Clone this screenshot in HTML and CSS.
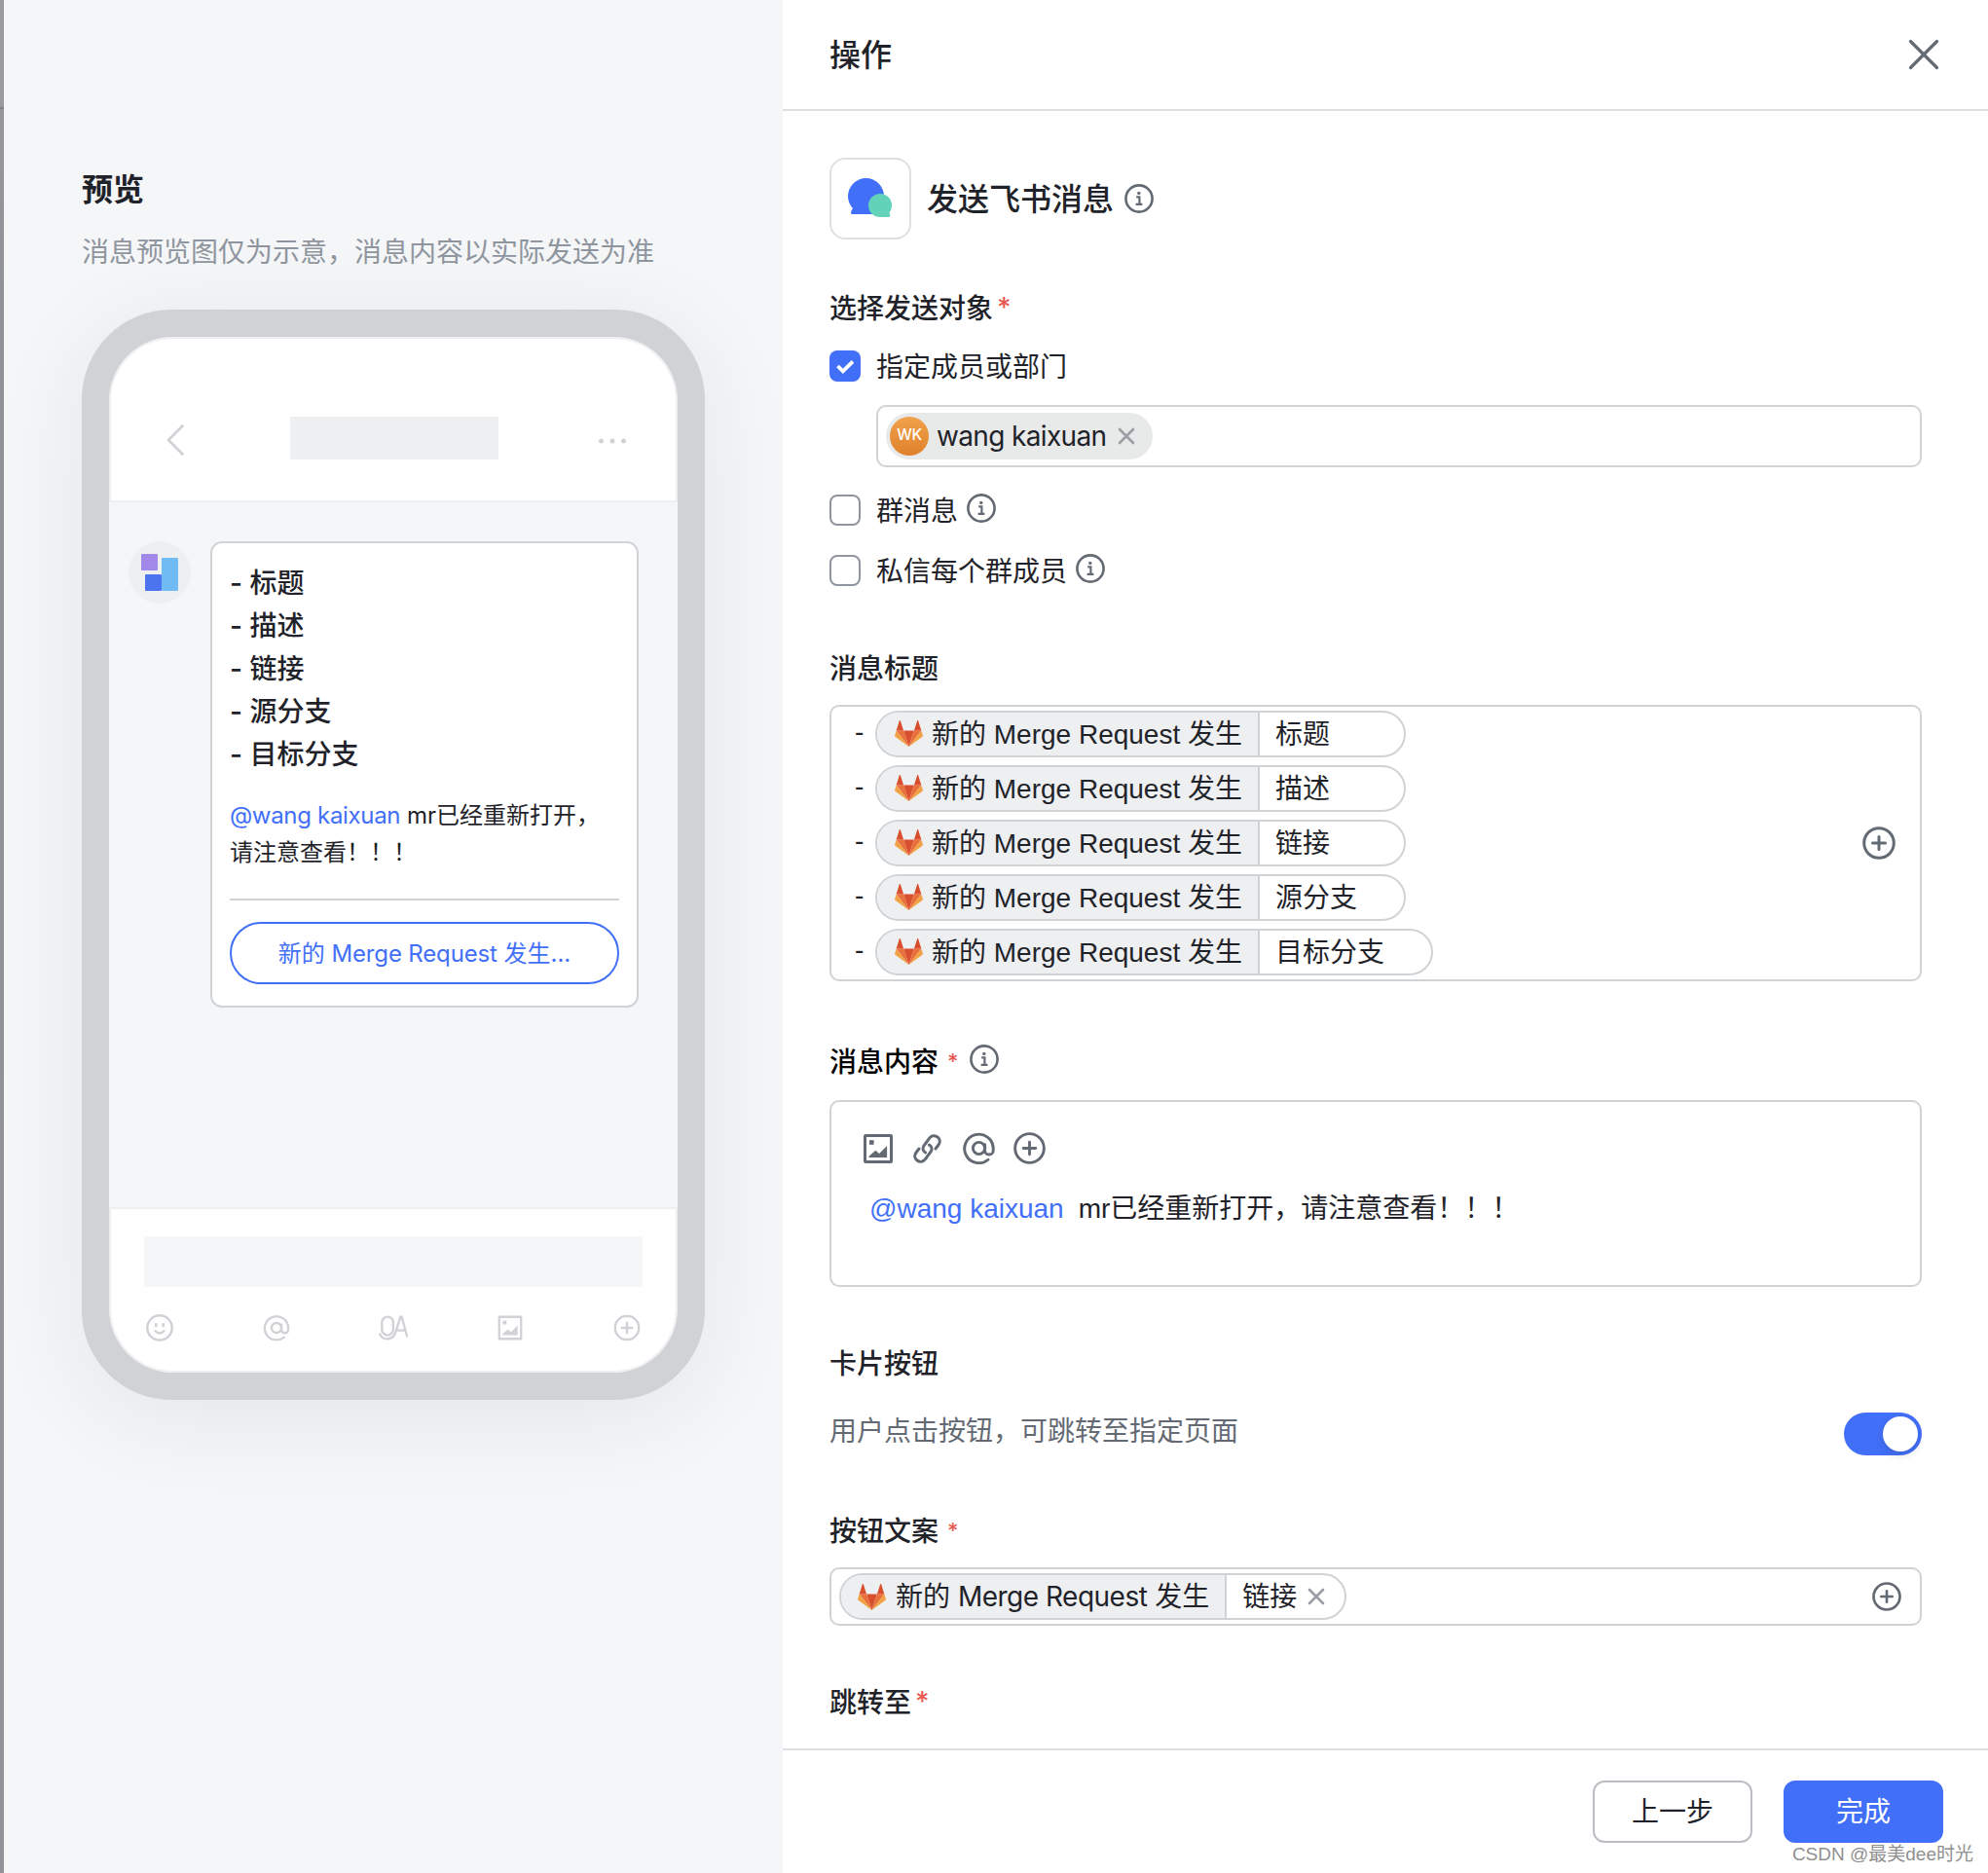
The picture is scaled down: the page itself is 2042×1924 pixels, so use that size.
FILE: index.html
```html
<!DOCTYPE html>
<html lang="zh-CN">
<head>
<meta charset="utf-8">
<title>操作</title>
<link rel="stylesheet" href="styles.css">
</head>
<body>
<svg class="sprite" aria-hidden="true">
  <symbol id="info" viewBox="0 0 30 30"><circle cx="15" cy="15" r="13.6" fill="none" stroke="currentColor" stroke-width="2.6"/><circle cx="14.8" cy="9.4" r="1.7" fill="currentColor"/><path d="M12.2 13.4h3.2v7M11.6 20.8h6.8" fill="none" stroke="currentColor" stroke-width="2.2"/></symbol>
  <symbol id="plus" viewBox="0 0 34 34"><circle cx="17" cy="17" r="15.3" fill="none" stroke="currentColor" stroke-width="3"/><path d="M17 10.500v13M10.500 17h13" fill="none" stroke="currentColor" stroke-width="3" stroke-linecap="round"/></symbol>
  <symbol id="at" viewBox="0 0 34 34"><g fill="none" stroke="currentColor" stroke-width="3" stroke-linecap="round"><circle cx="17" cy="17" r="6.3"/><path d="M23.300 13v6.200a4.400 4.400 0 0 0 8.900 0V17a15.200 15.200 0 1 0-5.400 12.100"/></g></symbol>
  <symbol id="image" viewBox="0 0 30 30"><rect x="1.500" y="1.500" width="27" height="27" rx=".6" fill="none" stroke="currentColor" stroke-width="3"/><rect x="6" y="6.200" width="4.600" height="4.600" fill="currentColor"/><path d="M5.500 24v-1.200l6.800-6.100 3.800 3.300 8-8V24z" fill="currentColor"/></symbol>
  <symbol id="fox" viewBox="0 0 28 26"><path fill="#d9502f" d="M14 26 19.2 10H8.8z"/><path fill="#e9703a" d="M14 26 8.8 10H1.6zM14 26l5.2-16h7.200z"/><path fill="#f0a245" d="M1.600 10 .1 14.900c-.2.500 0 1 .4 1.300L14 26zM26.400 10l1.500 4.900c.2.500 0 1-.4 1.300L14 26z"/><path fill="#d9502f" d="M1.600 10h7.200L5.700.5c-.2-.6-.9-.6-1.100 0zM26.400 10h-7.200L22.300.5c.2-.6.9-.6 1.100 0z"/></symbol>
  <symbol id="cross" viewBox="0 0 18 18"><path d="M2 2l14 14M16 2L2 16" fill="none" stroke="currentColor" stroke-width="2.600" stroke-linecap="round"/></symbol>
</svg>
<div class="app">
  <div class="edge"></div>
  <aside class="preview">
    <h2 class="preview-title">预览</h2>
    <p class="preview-note">消息预览图仅为示意，消息内容以实际发送为准</p>
    <div class="phone">
      <div class="phone-screen">
        <div class="phone-head">
          <svg class="back" viewBox="0 0 20 34"><path d="M17.500 2.500 3 17l14.500 14.500" fill="none" stroke="currentColor" stroke-width="2.800" stroke-linecap="round" stroke-linejoin="round"/></svg>
          <div class="phone-name"></div>
          <svg class="more" viewBox="0 0 30 8"><circle cx="3.500" cy="4" r="2.500"/><circle cx="15" cy="4" r="2.500"/><circle cx="26.500" cy="4" r="2.500"/></svg>
        </div>
        <div class="phone-chat">
          <svg class="bot" viewBox="0 0 64 64"><circle cx="32" cy="32" r="32" fill="#eeeff1"/><rect x="13" y="13" width="17" height="17" rx="1" fill="#a288e8"/><rect x="17" y="34" width="17" height="17" rx="1" fill="#4c74ee"/><rect x="34" y="17" width="17" height="34" rx="1" fill="#71bbf5"/></svg>
          <div class="card">
            <div class="card-title"><div>- 标题</div><div>- 描述</div><div>- 链接</div><div>- 源分支</div><div>- 目标分支</div></div>
            <p class="card-text"><span class="mention">@wang kaixuan</span> mr已经重新打开，<br>请注意查看！！！</p>
            <div class="card-action">新的 <span class="latin">Merge Request</span> 发生...</div>
          </div>
        </div>
        <div class="phone-foot">
          <div class="phone-input"></div>
          <div class="phone-tools">
            <svg viewBox="0 0 32 32"><g fill="none" stroke="currentColor" stroke-width="2.500"><circle cx="16" cy="16" r="12.700"/><path d="M10.800 18.500q5.200 6 10.400 0"/></g><path d="M11 11.300h2.600v4H11zM18.400 11.300H21v4h-2.600z" fill="currentColor"/></svg>
            <svg viewBox="-3 -3 40 40"><use href="#at" width="34" height="34"/></svg>
            <svg viewBox="0 0 32 32"><g fill="none" stroke="currentColor" stroke-width="2.400" stroke-linecap="round"><rect x="4.300" y="4.600" width="11.600" height="19" rx="5.800"/><path d="M2.300 22.500c2 6.200 12.500 7.200 15.700-1l5.400-16.900h1.200L30 24.500M19.800 18.600h8"/></g></svg>
            <svg viewBox="-4 -4 38 38"><use href="#image" width="30" height="30"/></svg>
            <svg viewBox="-3 -3 40 40"><use href="#plus" width="34" height="34"/></svg>
          </div>
        </div>
      </div>
    </div>
  </aside>
  <main class="panel">
    <header class="panel-head">
      <h1>操作</h1>
      <svg class="close" viewBox="0 0 32 32"><path d="M2.500 2.500l27 27M29.500 2.500l-27 27" fill="none" stroke="currentColor" stroke-width="3.200" stroke-linecap="round"/></svg>
    </header>
    <div class="panel-body">
      <div class="action">
        <div class="action-icon"><svg viewBox="0 0 48 44"><g fill="#426ff8"><circle cx="19.500" cy="20.500" r="18.500"/><path d="M6 32c0 2-2 3.500-2 5.500 0 1 .8 1.500 1.800 1.500H28V28z"/></g><g fill="#62d2b8"><circle cx="34" cy="30" r="12"/><path d="M43 36c0 1.500 1.300 2.500 1.300 4.300 0 1.100-.7 1.700-1.600 1.700H33v-6z"/></g></svg></div>
        <span class="action-name">发送飞书消息</span>
        <svg class="info"><use href="#info"/></svg>
      </div>

      <div class="label target-label">选择发送对象<span class="req tight">*</span></div>
      <div class="check"><span class="box checked"><svg viewBox="0 0 32 32"><path d="M8.500 16l5.300 5.300L24 11.300" fill="none" stroke="#fff" stroke-width="3.800"/></svg></span>指定成员或部门</div>
      <div class="member-input">
        <span class="member"><span class="avatar">WK</span><span class="member-name">wang kaixuan</span><svg class="cross"><use href="#cross"/></svg></span>
      </div>
      <div class="check group-check"><span class="box"></span>群消息<svg class="info"><use href="#info"/></svg></div>
      <div class="check private-check"><span class="box"></span>私信每个群成员<svg class="info"><use href="#info"/></svg></div>

      <div class="label title-label">消息标题</div>
      <div class="title-input">
        <div class="title-rows">
          <div class="title-row"><span class="dash">-</span><span class="token"><span class="source"><svg><use href="#fox"/></svg>新的 Merge Request 发生</span><span class="field">标题</span></span></div>
          <div class="title-row"><span class="dash">-</span><span class="token"><span class="source"><svg><use href="#fox"/></svg>新的 Merge Request 发生</span><span class="field">描述</span></span></div>
          <div class="title-row"><span class="dash">-</span><span class="token"><span class="source"><svg><use href="#fox"/></svg>新的 Merge Request 发生</span><span class="field">链接</span></span></div>
          <div class="title-row"><span class="dash">-</span><span class="token"><span class="source"><svg><use href="#fox"/></svg>新的 Merge Request 发生</span><span class="field">源分支</span></span></div>
          <div class="title-row"><span class="dash">-</span><span class="token"><span class="source"><svg><use href="#fox"/></svg>新的 Merge Request 发生</span><span class="field">目标分支</span></span></div>
        </div>
        <svg class="add-big"><use href="#plus"/></svg>
      </div>

      <div class="label content-label">消息内容<span class="req">*</span><svg class="info"><use href="#info"/></svg></div>
      <div class="editor">
        <div class="tools">
          <svg class="tool-image"><use href="#image"/></svg>
          <svg class="tool-link" viewBox="0 -1 30 32"><g fill="none" stroke="currentColor" stroke-width="3" stroke-linecap="round"><path d="M12.600 19C9.800 17.300 9.200 14.300 11 11.800L16.500 4.300C18.600 1.500 22.200.9 25 3c2.600 2 3 5.400 1 8l-3 4"/><path d="M16.400 11c2.800 1.700 3.400 4.700 1.600 7.200l-5.500 7.500C10.400 28.500 6.800 29.100 4 27c-2.600-2-3-5.400-1-8l3-4"/></g></svg>
          <svg class="tool-round"><use href="#at"/></svg>
          <svg class="tool-round"><use href="#plus"/></svg>
        </div>
        <p class="editor-text"><span class="mention">@wang kaixuan</span><span>mr已经重新打开，请注意查看！！！</span></p>
      </div>

      <div class="label card-label">卡片按钮</div>
      <div class="switch-row"><span>用户点击按钮，可跳转至指定页面</span><span class="switch"></span></div>

      <div class="label copy-label">按钮文案<span class="req">*</span></div>
      <div class="copy-input">
        <span class="token copy-token"><span class="source"><svg><use href="#fox"/></svg><span>新的 <span class="latin">Merge Request</span> 发生</span></span><span class="field">链接<svg class="cross"><use href="#cross"/></svg></span></span>
        <svg class="add"><use href="#plus"/></svg>
      </div>

      <div class="label jump-label">跳转至<span class="req tight">*</span></div>
    </div>
    <footer class="panel-foot">
      <button class="btn">上一步</button>
      <button class="btn primary">完成</button>
    </footer>
    <div class="watermark">CSDN @最美dee时光</div>
  </main>
</div>
</body>
</html>
```
FILE: styles.css
```css
* { box-sizing: border-box; margin: 0; padding: 0; }
body {
  font-family: Inter, "Noto Sans CJK SC", sans-serif;
  font-size: 28px;
  line-height: 44px;
  color: #1f2329;
  background: #fff;
}
svg { display: block; flex: none; }
.sprite { position: absolute; width: 0; height: 0; }
.app { display: flex; width: 2042px; height: 1924px; overflow: hidden; }
.edge {
  flex: none;
  width: 4px;
  background: linear-gradient(#9b9b9d 0 110px, #828286 110px 112px, #97979b 112px, #919198 300px, #929298);
}

/* preview column */
.preview {
  width: 800px;
  flex: none;
  padding: 171px 80px 0;
  background: #f5f6f8;
}
.preview-title { font-size: 32px; line-height: 48px; font-weight: 700; }
.preview-note { margin-top: 18px; color: #8f959e; white-space: nowrap; }
.phone {
  width: 640px;
  height: 1120px;
  margin-top: 37px;
  padding: 28px;
  border-radius: 92px;
  background: #d1d2d6;
  box-shadow: 0 16px 96px rgba(31, 35, 41, .08);
}
.phone-screen {
  display: flex;
  flex-direction: column;
  height: 1064px;
  border-radius: 66px;
  overflow: hidden;
  background: #f5f6f8;
}
.phone-head, .phone-foot { background: #fff; border: 2px solid #eeeff1; color: #d1d2d6; }
.phone-head {
  display: flex;
  align-items: center;
  justify-content: space-between;
  height: 170px;
  padding: 38px 50px 0 56px;
  border-radius: 66px 66px 0 0;
}
.back { width: 20px; height: 34px; margin-top: 4px; }
.phone-name { width: 214px; height: 44px; margin-left: 5px; background: #eeeff1; }
.more { width: 30px; height: 8px; margin-top: 6px; fill: currentColor; }
.phone-chat { display: flex; gap: 20px; height: 724px; padding: 40px 20px; }
.bot { width: 64px; height: 64px; }
.card {
  width: 440px;
  height: 479px;
  padding: 18px;
  border: 2px solid #d0d3d6;
  border-radius: 12px;
  background: #fff;
}
.card-title { padding-top: 1px; font-weight: 500; line-height: 44px; }
.card-text { height: 106px; margin-top: 22px; border-bottom: 2px solid #d0d3d6; font-size: 24px; line-height: 38px; white-space: nowrap; }
.card-text .mention { letter-spacing: -.32px; }
.mention { color: #426ff8; }
.card-action {
  height: 64px;
  margin-top: 22px;
  border: 2px solid #426ff8;
  border-radius: 32px;
  color: #426ff8;
  font-size: 24px;
  line-height: 62px;
  text-align: center;
}
.card-action .latin { letter-spacing: -.15px; }
.phone-foot { height: 170px; padding: 28px 34px 0; border-radius: 0 0 66px 66px; }
.phone-input { height: 52px; background: #f5f6f8; }
.phone-tools { display: flex; justify-content: space-between; margin-top: 26px; }
.phone-tools svg { width: 32px; height: 32px; }

/* settings panel */
.panel { position: relative; display: flex; flex-direction: column; flex: 1; }
.panel-head {
  display: flex;
  align-items: center;
  justify-content: space-between;
  height: 114px;
  padding: 0 50px 0 48px;
  border-bottom: 2px solid #dedfe1;
}
.panel-head h1 { padding-top: 2px; font-size: 32px; font-weight: 500; line-height: 48px; }
.close { width: 32px; height: 32px; color: #646a73; }
.panel-body { height: 1682px; padding: 48px 68px 0 48px; overflow: hidden; }
.action { display: flex; align-items: center; height: 84px; }
.action-icon { display: flex; align-items: flex-start; justify-content: center; width: 84px; height: 84px; padding-top: 17px; border: 2px solid #dee0e3; border-radius: 16px; }
.action-icon svg { width: 48px; height: 44px; }
.action-name { padding-top: 2px; margin: 0 11px 0 16px; font-size: 32px; font-weight: 500; }
.info { width: 30px; height: 30px; color: #646a73; }
.label { display: flex; align-items: center; height: 44px; padding-top: 2px; font-weight: 500; white-space: nowrap; }
.req { margin: -2px 0 0 9px; color: #e85a50; font-size: 22px; }
.req.tight { margin-left: 4px; font-size: 28px; }
.target-label { margin-top: 48px; }
.check { display: flex; align-items: center; height: 44px; padding-top: 1px; }
.target-label + .check { margin-top: 16px; }
.check .info { margin: -6px 0 0 9px; }
.box { width: 32px; height: 32px; margin: -1px 16px 0 0; border: 2px solid #8f959e; border-radius: 8px; }
.box.checked { border: 0; background: #426ff8; }
.member-input { display: flex; height: 64px; margin: 18px 0 0 48px; padding: 6px 8px; border: 2px solid #d0d3d6; border-radius: 10px; }
.member { display: flex; align-items: center; width: 274px; height: 48px; padding-left: 4px; border-radius: 24px; background: #e8eaea; }
.avatar { width: 40px; height: 40px; border-radius: 50%; background: linear-gradient(#f0a24a, #e0812c); color: #fff; font-size: 15.5px; font-weight: 500; letter-spacing: -.3px; line-height: 38px; text-align: center; }
.member-name { width: 174px; margin: 0 12px 0 8px; letter-spacing: -.65px; white-space: nowrap; }
.cross { width: 18px; height: 18px; color: #9a9da3; }
.group-check { margin-top: 22px; }
.private-check { margin-top: 18px; }
.title-label { margin-top: 56px; }
.title-input {
  display: flex;
  align-items: center;
  justify-content: space-between;
  height: 284px;
  margin-top: 16px;
  padding: 0 25px 0 24px;
  border: 2px solid #d0d3d6;
  border-radius: 10px;
  font-family: "Liberation Sans", "Noto Sans CJK SC", sans-serif;
}
.title-rows { display: flex; flex-direction: column; gap: 8px; }
.title-row { display: flex; height: 48px; }
.dash { width: 21px; line-height: 43px; }
.token { display: flex; min-width: 545px; height: 48px; border: 2px solid #d0d3d6; border-radius: 24px; overflow: hidden; white-space: nowrap; }
.source { display: flex; align-items: center; height: 44px; padding: 1px 16px 0 18px; border-right: 2px solid #d0d3d6; background: #eeeff1; }
.source svg { width: 29px; height: 27px; margin: -2px 9px 0 0; }
.field { display: flex; align-items: center; padding: 1px 48px 0 16px; }
.add-big { width: 34px; height: 34px; margin-top: -1px; color: #646a73; }
.content-label { margin-top: 60px; color: #000; }
.content-label .info { margin: -6px 0 0 12px; }
.editor { height: 192px; margin-top: 18px; padding: 30px 33px; border: 2px solid #d0d3d6; border-radius: 10px; font-family: "Liberation Sans", "Noto Sans CJK SC", sans-serif; }
.tools { display: flex; align-items: center; height: 35px; color: #646a73; }
.tool-image { width: 30px; height: 30px; margin-right: 21px; }
.tool-link { width: 30px; height: 32px; margin-right: 21px; }
.tool-round { width: 33px; height: 33px; margin-right: 19px; }
.editor-text { display: flex; gap: 15px; margin: 23px 0 0 6px; white-space: nowrap; }
.card-label { margin-top: 56px; }
.switch-row { display: flex; align-items: center; justify-content: space-between; height: 44px; margin-top: 26px; color: #646a73; }
.switch { width: 80px; height: 44px; margin-top: 6px; padding: 4px; border-radius: 22px; background: #426ff8; }
.switch::after { content: ""; display: block; width: 36px; height: 36px; margin-left: auto; border-radius: 50%; background: #fff; box-shadow: 0 4px 8px rgba(31, 35, 41, .15); }
.copy-label { margin-top: 58px; }
.copy-input { display: flex; align-items: center; justify-content: space-between; height: 60px; margin-top: 16px; padding: 0 19px 0 8px; border: 2px solid #d0d3d6; border-radius: 10px; }
.copy-token { min-width: 0; }
.copy-token .source { padding: 0 16px 0 17px; }
.copy-token .source svg { margin: 0 10px 0 0; }
.copy-token .latin { letter-spacing: -.5px; }
.copy-token .field { padding: 0 20px 0 16px; }
.copy-token .cross { margin-left: 11px; }
.add { width: 30px; height: 30px; color: #646a73; }
.jump-label { margin-top: 56px; }
.panel-foot { display: flex; justify-content: flex-end; gap: 32px; height: 128px; padding: 31px 46px 0 0; border-top: 2px solid #dee0e3; }
.btn { width: 164px; height: 64px; border: 2px solid #bbbfc4; border-radius: 12px; background: #fff; color: #1f2329; font: inherit; }
.btn.primary { border-color: #426ff8; background: #426ff8; color: #fff; }
.watermark { position: absolute; right: 15px; bottom: 4px; color: #8f8f8f; font-size: 19px; line-height: 30px; font-family: "Liberation Sans", "Noto Sans CJK SC", sans-serif; white-space: nowrap; }
```
